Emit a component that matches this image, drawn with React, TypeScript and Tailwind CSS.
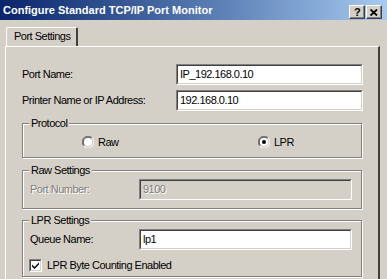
import React from "react";

const FACE = "bg-[#d4d0c8]";

function Sunken({ value, w, disabled }: { value: string; w: string; disabled?: boolean }) {
  return (
    <div
      className={`${w} h-[21px] border border-t-[#808080] border-l-[#808080] border-r-white border-b-white`}
    >
      <div
        className={`h-full border border-t-[#404040] border-l-[#404040] border-r-[#d4d0c8] border-b-[#d4d0c8] flex items-center pl-[2px] ${
          disabled ? "bg-[#d4d0c8] text-[#808080] [text-shadow:1px_1px_0_#fff]" : "bg-white text-black"
        }`}
      >
        {value}
      </div>
    </div>
  );
}

function Group({ title, h, children }: { title: string; h: string; children?: React.ReactNode }) {
  return (
    <div
      className={`relative w-[340px] ${h} border border-[#808080] shadow-[inset_1px_1px_0_#fff,1px_1px_0_#fff]`}
    >
      <span className={`absolute -top-[8px] left-[6px] px-[2px] leading-[14px] ${FACE}`}>{title}</span>
      {children}
    </div>
  );
}

function Radio({ checked }: { checked?: boolean }) {
  return (
    <svg width="12" height="12" viewBox="0 0 12 12">
      <path d="M10.2 1.8 A5.5 5.5 0 0 0 1.8 10.2" fill="none" stroke="#808080" strokeWidth="1" />
      <path d="M9.5 2.5 A4.5 4.5 0 0 0 2.5 9.5" fill="none" stroke="#404040" strokeWidth="1" />
      <path d="M1.8 10.2 A5.5 5.5 0 0 0 10.2 1.8" fill="none" stroke="#ffffff" strokeWidth="1" />
      <path d="M2.5 9.5 A4.5 4.5 0 0 0 9.5 2.5" fill="none" stroke="#d4d0c8" strokeWidth="1" />
      <circle cx="6" cy="6" r="4" fill="#fff" />
      {checked && <circle cx="6" cy="6" r="2" fill="#000" />}
    </svg>
  );
}

function Check() {
  return (
    <div className="w-[13px] h-[13px] border border-t-[#808080] border-l-[#808080] border-r-white border-b-white">
      <div className="w-full h-full border border-t-[#404040] border-l-[#404040] border-r-[#d4d0c8] border-b-[#d4d0c8] bg-white">
        <svg width="9" height="9" viewBox="0 0 9 9" className="block">
          <path d="M1 3.5 L3.5 6 L8 1.5 L8 3.5 L3.5 8 L1 5.5 Z" fill="#000" />
        </svg>
      </div>
    </div>
  );
}

function CapButton({ children }: { children: React.ReactNode }) {
  return (
    <div className="w-[16px] h-[14px] bg-[#d4d0c8] border border-t-white border-l-white border-r-[#404040] border-b-[#404040] shadow-[inset_-1px_-1px_0_#808080] flex items-center justify-center text-black font-bold text-[11px] leading-none">
      {children}
    </div>
  );
}

export default function App() {
  return (
    <div
      className={`w-[387px] h-[279px] overflow-hidden ${FACE} text-[11px] tracking-[-0.5px] text-black`}
      style={{ fontFamily: '"Liberation Sans", Arial, sans-serif' }}
    >
      {/* title bar */}
      <div className="h-[20px] bg-gradient-to-r from-[#0a246a] to-[#a6caf0] flex items-start pl-[3px] pr-[5px]">
        <span className="text-white font-bold tracking-normal leading-[20px]">
          Configure Standard TCP/IP Port Monitor
        </span>
        <div className="ml-auto flex gap-[1px] mt-[5px]">
          <CapButton>?</CapButton>
          <CapButton>
            <svg width="8" height="7" viewBox="0 0 8 7">
              <path d="M0.5 0.5 L7 6.5 M7 0.5 L0.5 6.5" stroke="#000" strokeWidth="1.8" />
            </svg>
          </CapButton>
        </div>
      </div>

      {/* tabs */}
      <div className="pl-[6px] pt-[7px] h-[26px]">
        <div className="relative z-10 w-[72px] h-[19px] border-t border-l border-white border-r-2 border-r-[#404040] rounded-t-[2px] bg-[#d4d0c8] flex items-center pl-[7px] pb-[1px]">
          Port Settings
        </div>
      </div>

      {/* panel */}
      <div className="ml-[5px] w-[375px] h-[260px] border-t border-l border-white border-r-2 border-r-[#404040] pl-[16px] pt-[17px]">
        <div className="w-[341px] flex items-center">
          <span>Port Name:</span>
          <div className="ml-auto">
            <Sunken value="IP_192.168.0.10" w="w-[187px]" />
          </div>
        </div>
        <div className="w-[341px] flex items-center mt-[5px]">
          <span>Printer Name or IP Address:</span>
          <div className="ml-auto">
            <Sunken value="192.168.0.10" w="w-[187px]" />
          </div>
        </div>

        <div className="mt-[12px]">
          <Group title="Protocol" h="h-[35px]">
            <div className="grid grid-cols-[176px_auto] pl-[59px] pt-[10px]">
              <div className="flex items-center gap-[4px]">
                <Radio />
                <span>Raw</span>
              </div>
              <div className="flex items-center gap-[4px]">
                <Radio checked />
                <span>LPR</span>
              </div>
            </div>
          </Group>
        </div>

        <div className="mt-[12px]">
          <Group title="Raw Settings" h="h-[39px]">
            <div className="flex items-center pl-[7px] pt-[8px]">
              <span className="w-[109px] text-[#808080] [text-shadow:1px_1px_0_#fff]">Port Number:</span>
              <Sunken value="9100" w="w-[213px]" disabled />
            </div>
          </Group>
        </div>

        <div className="mt-[11px]">
          <Group title="LPR Settings" h="h-[57px]">
            <div className="flex items-center pl-[7px] pt-[8px]">
              <span className="w-[109px]">Queue Name:</span>
              <Sunken value="lp1" w="w-[213px]" />
            </div>
            <div className="flex items-center gap-[5px] pl-[6px] mt-[7px]">
              <Check />
              <span>LPR Byte Counting Enabled</span>
            </div>
          </Group>
        </div>
      </div>
    </div>
  );
}
